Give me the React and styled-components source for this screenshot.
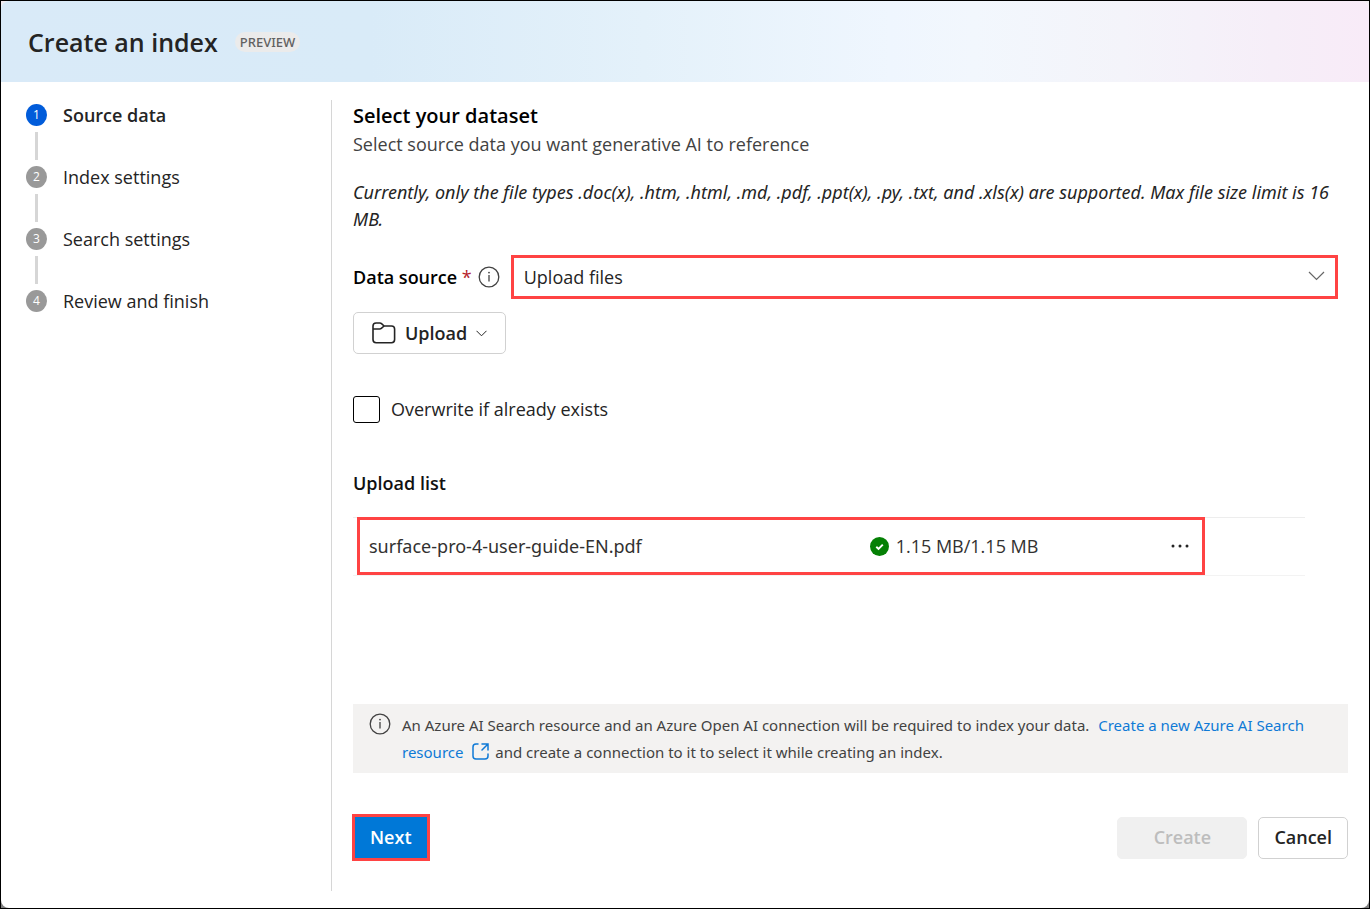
import React, { useState } from "react";
import styled, { createGlobalStyle } from "styled-components";

const GlobalStyle = createGlobalStyle`
  *, *::before, *::after { box-sizing: border-box; }
  body {
    margin: 0;
    background: #fff;
    color: #242424;
    font-family: "Segoe UI", "Open Sans", "Noto Sans", sans-serif;
    font-size: 18px;
    line-height: 27px;
  }
  h1, h2, h3, p, ol, ul { margin: 0; padding: 0; }
  ol, ul { list-style: none; }
  button, select, input { font: inherit; color: inherit; }
`;

const Backdrop = styled.div`
  display: flex;
  min-height: 100vh;
  border: 1px solid #000;
  background: linear-gradient(#f3edf2, #808080);
`;

const Dialog = styled.div`
  display: flex;
  flex: 1;
  flex-direction: column;
  min-width: 0;
  border-radius: 8px;
  background: #fff;
  overflow: hidden;
`;

const Header = styled.header`
  display: flex;
  align-items: center;
  gap: 17px;
  padding: 21px 27px 20px;
  background: linear-gradient(90deg, #d9eaf8 0%, #d9ebf8 27%, #e4f1fa 47%, #eff6fe 65%, #f2f7fd 71%, #f4f4fa 82%, #f6eef8 93%, #f8ebf8 100%);
`;

const Title = styled.h1`
  font-size: 25px;
  font-weight: 600;
  line-height: 40px;
`;

const Badge = styled.span`
  padding: 0 5px;
  border-radius: 10px;
  background: #ebebeb;
  color: #616161;
  font-family: "Segoe UI", "Noto Sans", "Open Sans", sans-serif;
  font-size: 13px;
  font-weight: 500;
  line-height: 20px;
`;

const Body = styled.div`
  display: flex;
  flex: 1;
  padding: 18px 21px 17px 25px;
`;

const Steps = styled.nav`
  flex: 0 0 306px;
  border-right: 1px solid #d6d6d6;
`;

const Step = styled.li`
  display: grid;
  grid-template-columns: 21px 1fr;
  column-gap: 16px;
  padding-top: 4px;
  padding-bottom: 2px;
  align-items: center;
`;

const StepNumber = styled.span`
  display: flex;
  align-items: center;
  justify-content: center;
  height: 22px;
  border-radius: 50%;
  background: ${(p) => (p.$active ? "#015cda" : "#999")};
  color: #fff;
  font-size: 12px;
  line-height: 22px;
`;

const StepLabel = styled.span`
  font-weight: ${(p) => (p.$active ? 600 : 400)};
  line-height: 22px;
`;

const Connector = styled.span`
  justify-self: center;
  width: 3px;
  height: 28px;
  margin-top: 6px;
  background: #d6d6d6;
`;

const Main = styled.main`
  flex: 1;
  min-width: 0;
  padding-left: 21px;
`;

const Heading = styled.h2`
  color: #000;
  font-size: 20px;
  font-weight: 600;
  line-height: 32px;
`;

const Subtitle = styled.p`
  color: #424242;
  line-height: 25px;
`;

const Note = styled.p`
  margin-top: 22px;
  font-family: "Segoe UI", "Noto Sans", "Open Sans", sans-serif;
  font-style: italic;
`;

const Field = styled.div`
  display: flex;
  align-items: center;
  margin: 22px 10px 0 0;
`;

const FieldLabel = styled.label`
  margin-right: 6px;
  font-weight: 600;
  color: #000;
`;

const Required = styled.span`
  color: #b5222c;
  font-weight: 400;
`;

const SelectBox = styled.div`
  position: relative;
  flex: 1;
  margin-left: 11px;
`;

const Select = styled.select`
  display: block;
  width: 100%;
  height: 44px;
  padding: 0 10px;
  border: 3px solid #ff4343;
  border-radius: 0;
  background: #fff;
  appearance: none;
`;

const SelectArrow = styled.svg`
  position: absolute;
  top: 16px;
  right: 13px;
  pointer-events: none;
`;

const Button = styled.button`
  display: inline-flex;
  align-items: center;
  justify-content: center;
  height: 42px;
  padding: 0 15px;
  border: 1px solid #d1d1d1;
  border-radius: 5px;
  background: #fff;
  font-weight: 600;
`;

const UploadButton = styled(Button)`
  gap: 9px;
  margin-top: 13px;
  padding: 0 18px;
`;

const CheckRow = styled.label`
  display: flex;
  align-items: center;
  gap: 11px;
  margin-top: 42px;
`;

const Checkbox = styled.input`
  width: 27px;
  height: 27px;
  margin: 0;
  border: 1px solid #000;
  border-radius: 3px;
  background: #fff;
  appearance: none;
  &:checked { background: #0078d7; }
`;

const ListTitle = styled.h3`
  margin-top: 47px;
  font-size: 18px;
  font-weight: 600;
  color: #111;
`;

const FileList = styled.ul`
  margin: 20px 43px 0 0;
`;

const FileItem = styled.li`
  padding-left: 4px;
  border-top: 1px solid #ededed;
  border-bottom: 1px solid #f3f3f3;
`;

const FileRow = styled.div`
  display: grid;
  grid-template-columns: 500fr 298fr 24px;
  align-items: center;
  width: 848px;
  max-width: 100%;
  height: 58px;
  margin: -1px 0 0;
  padding: 0 10px 0 9px;
  border: 3px solid #ff4343;
  color: #323130;
`;

const FileName = styled.span`
  font-family: "Segoe UI", "Noto Sans", "Open Sans", sans-serif;
`;

const FileSize = styled.span`
  display: flex;
  align-items: center;
  gap: 7px;
`;

const MoreButton = styled.button`
  display: flex;
  align-items: center;
  justify-content: center;
  width: 24px;
  height: 24px;
  padding: 0;
  border: 0;
  background: none;
`;

const Notice = styled.div`
  display: flex;
  gap: 11px;
  margin-top: 128px;
  padding: 8px 16px 7px;
  background: #f3f2f1;
  color: #424242;
  font-family: "Segoe UI", "Noto Sans", "Open Sans", sans-serif;
  font-size: 15px;
`;

const NoticeIcon = styled.span`
  flex: none;
  display: flex;
  align-items: center;
  height: 24px;
`;

const Link = styled.a`
  margin-left: 5px;
  color: #0f7ad6;
  text-decoration: none;
  svg { margin: 0 2px 0 5px; vertical-align: -2px; }
`;

const Footer = styled.footer`
  display: flex;
  align-items: center;
  gap: 11px;
  margin-top: 41px;
`;

const NextButton = styled(Button)`
  height: 47px;
  margin: 0 auto 0 -1px;
  border: 3px solid #ff4343;
  border-radius: 0;
  background: #0078d7;
  color: #fff;
`;

const CreateButton = styled(Button)`
  width: 130px;
  border-color: #f0f0f0;
  background: #f0f0f0;
  color: #bdbdbd;
`;

function InfoIcon() {
  return (
    <svg width="22" height="22" viewBox="0 0 22 22" fill="none" stroke="#424242" strokeWidth="1.3" aria-hidden="true">
      <circle cx="11" cy="11" r="9.8" />
      <path d="M11 9v6.5" />
      <circle cx="11" cy="6.6" r=".9" fill="#424242" stroke="none" />
    </svg>
  );
}

function FolderIcon() {
  return (
    <svg width="24" height="22" viewBox="0 0 24 22" fill="none" stroke="#242424" strokeWidth="1.6" strokeLinejoin="round" aria-hidden="true">
      <path d="M1 17.6V4.1Q1 1 4.1 1h3.8q.9 0 1.6.6l2.6 2.4h7.4Q22.6 4 22.6 7v10.6Q22.6 20.7 19.5 20.7H4.1Q1 20.7 1 17.6Z" />
      <path d="M1 7h6.7q.9 0 1.6-.6l2.8-2.4" />
    </svg>
  );
}

const steps = ["Source data", "Index settings", "Search settings", "Review and finish"];

export default function App() {
  const [overwrite, setOverwrite] = useState(false);
  return (
    <Backdrop>
      <GlobalStyle />
      <Dialog>
        <Header>
          <Title>Create an index</Title>
          <Badge>PREVIEW</Badge>
        </Header>
        <Body>
          <Steps aria-label="Steps">
            <ol>
              {steps.map((label, i) => (
                <Step key={label} aria-current={i === 0 ? "step" : undefined}>
                  <StepNumber $active={i === 0}>{i + 1}</StepNumber>
                  <StepLabel $active={i === 0}>{label}</StepLabel>
                  {i < steps.length - 1 && <Connector />}
                </Step>
              ))}
            </ol>
          </Steps>
          <Main>
            <Heading>Select your dataset</Heading>
            <Subtitle>Select source data you want generative AI to reference</Subtitle>
            <Note>
              Currently, only the file types .doc(x), .htm, .html, .md, .pdf, .ppt(x), .py, .txt, and .xls(x) are
              supported. Max file size limit is 16 MB.
            </Note>
            <Field>
              <FieldLabel htmlFor="source">
                Data source <Required>*</Required>
              </FieldLabel>
              <InfoIcon />
              <SelectBox>
                <Select id="source" defaultValue="files">
                  <option value="files">Upload files</option>
                </Select>
                <SelectArrow width="17" height="10" viewBox="0 0 17 10" fill="none" stroke="#666" strokeWidth="1.2" aria-hidden="true">
                  <path d="M1 1l7.5 7.5L16 1" />
                </SelectArrow>
              </SelectBox>
            </Field>
            <UploadButton type="button">
              <FolderIcon />
              Upload
              <svg width="11" height="7" viewBox="0 0 11 7" fill="none" stroke="#242424" strokeWidth="1" aria-hidden="true">
                <path d="M.5.8L5.5 5.800 10.500.800" />
              </svg>
            </UploadButton>
            <CheckRow>
              <Checkbox type="checkbox" checked={overwrite} onChange={(e) => setOverwrite(e.target.checked)} />
              Overwrite if already exists
            </CheckRow>
            <ListTitle>Upload list</ListTitle>
            <FileList>
              <FileItem>
                <FileRow>
                  <FileName>surface-pro-4-user-guide-EN.pdf</FileName>
                  <FileSize>
                    <svg width="19" height="19" viewBox="0 0 19 19" aria-hidden="true">
                      <circle cx="9.5" cy="9.5" r="9.5" fill="#058005" />
                      <path d="M6.3 9.8l2.2 2.1 4.3-4.3" fill="none" stroke="#fff" strokeWidth="2" />
                    </svg>
                    1.15 MB/1.15 MB
                  </FileSize>
                  <MoreButton type="button" aria-label="More options">
                    <svg width="18" height="4" viewBox="0 0 18 4" fill="#242424" aria-hidden="true">
                      <circle cx="2" cy="2" r="1.5" />
                      <circle cx="9" cy="2" r="1.5" />
                      <circle cx="16" cy="2" r="1.5" />
                    </svg>
                  </MoreButton>
                </FileRow>
              </FileItem>
            </FileList>
            <Notice>
              <NoticeIcon>
                <InfoIcon />
              </NoticeIcon>
              <p>
                An Azure AI Search resource and an Azure Open AI connection will be required to index your data.{" "}
                <Link href="#search-resource">
                  Create a new Azure AI Search resource{" "}
                  <svg width="17" height="17" viewBox="0 0 17 17" fill="none" stroke="#0f7ad6" strokeWidth="1.5" strokeLinecap="round" aria-hidden="true">
                    <path d="M6 1H4Q1 1 1 4v9q0 3 3 3h9q3 0 3-3v-2" />
                    <path d="M10 1h6v6M16 1l-6 6" />
                  </svg>
                </Link>{" "}
                and create a connection to it to select it while creating an index.
              </p>
            </Notice>
            <Footer>
              <NextButton type="button">Next</NextButton>
              <CreateButton type="button" disabled>
                Create
              </CreateButton>
              <Button type="button">Cancel</Button>
            </Footer>
          </Main>
        </Body>
      </Dialog>
    </Backdrop>
  );
}
